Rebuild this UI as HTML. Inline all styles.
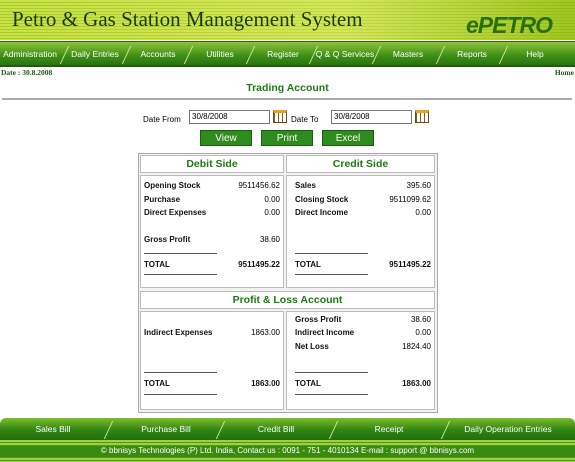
<!DOCTYPE html><html><head><style>
*{margin:0;padding:0;box-sizing:border-box}
body{width:575px;height:462px;position:relative;background:#fff;font-family:"Liberation Sans",Verdana,sans-serif;overflow:hidden}
.a{position:absolute}
.hdr{left:0;top:0;width:575px;height:40px;background:repeating-linear-gradient(180deg,#c8e04a 0 2px,#a8cc20 2px 3px);}
.hdr:after{content:"";position:absolute;left:0;top:0;right:0;bottom:0;background:linear-gradient(90deg,rgba(255,255,255,0) 0,rgba(230,240,120,.4) 60%,rgba(120,170,0,.5) 100%)}
.nav{left:0;top:41px;width:575px;height:26px;background:linear-gradient(#8cc43a,#3e8e16 60%,#2a7410);border-top:1px solid #2a6a0a;border-bottom:2px solid #1f5e08}
.nav span,.fn span{position:absolute;top:7px;color:#fff;font-size:8.5px;transform:translateX(-50%);white-space:nowrap}
.sl{position:absolute;top:4px;width:1px;height:18px;background:#cfe8a0;transform:skewX(-25deg)}
.b{font-weight:bold;font-size:8px;color:#111}
.r{text-align:right}
.g{color:#1d7a12;font-weight:bold;font-size:10.5px;text-align:center}
.box{border:1px solid #bbb;background:#fff}
.ln{height:1px;background:#555;width:73px}
.btn{background:#2e8b1e;color:#fff;font-size:10px;text-align:center;line-height:16px;height:16px;border:1px solid #1b5e10}
.in{border:1px solid #777;height:14px;font-size:8px;padding:1px 2px;background:#fff}
.cal{width:14px;height:13px;background:repeating-linear-gradient(90deg,#8a5a20 0 1px,#fff 1px 4px),#fff;border:1px solid #6a4a10;border-top:3px solid #e8a020}
</style></head><body>
<div class="a hdr"></div>
<div class="a" style="left:12px;top:7px;font-family:'Liberation Serif',serif;font-size:21px;color:#1b3a08">Petro &amp; Gas Station Management System</div>
<div class="a" style="left:466px;top:12px;font-size:23px;font-weight:bold;color:#2a700a;font-style:italic;letter-spacing:-1px">ePETRO</div>
<div class="a nav">
<span style="left:30px">Administration</span><span style="left:95px">Daily Entries</span><span style="left:158px">Accounts</span><span style="left:220px">Utilities</span><span style="left:283px">Register</span><span style="left:345px">Q &amp; Q Services</span><span style="left:408px">Masters</span><span style="left:472px">Reports</span><span style="left:535px">Help</span>
<i class="sl" style="left:64px"></i><i class="sl" style="left:126px"></i><i class="sl" style="left:188px"></i><i class="sl" style="left:250px"></i><i class="sl" style="left:313px"></i><i class="sl" style="left:376px"></i><i class="sl" style="left:440px"></i><i class="sl" style="left:503px"></i>
</div>
<div class="a" style="left:1px;top:68px;font-size:7.5px;font-weight:bold;color:#1d5a10;font-family:'Liberation Serif',serif">Date : 30.8.2008</div>
<div class="a" style="right:1px;top:68px;font-size:7.5px;font-weight:bold;color:#1d5a10;font-family:'Liberation Serif',serif">Home</div>
<div class="a g" style="left:0;width:575px;top:82px">Trading Account</div>
<div class="a" style="left:2px;top:98px;width:570px;height:2px;background:#aaa"></div>
<div class="a" style="left:143px;top:115px;font-size:8px">Date From</div>
<div class="a in" style="left:189px;top:110px;width:81px">30/8/2008</div>
<div class="a cal" style="left:273px;top:110px"></div>
<div class="a" style="left:291px;top:115px;font-size:8px">Date To</div>
<div class="a in" style="left:331px;top:110px;width:81px">30/8/2008</div>
<div class="a cal" style="left:415px;top:110px"></div>
<div class="a btn" style="left:200px;top:130px;width:52px">View</div>
<div class="a btn" style="left:261px;top:130px;width:52px">Print</div>
<div class="a btn" style="left:322px;top:130px;width:52px">Excel</div>
<div class="a" style="left:138px;top:153px;width:300px;height:260px;border:1px solid #aaa;background:#f2f2f2"></div>
<div class="a box g" style="left:140px;top:155px;width:144px;height:18px;line-height:17px">Debit Side</div>
<div class="a box g" style="left:286px;top:155px;width:149px;height:18px;line-height:17px">Credit Side</div>
<div class="a box" style="left:140px;top:175px;width:144px;height:113px"></div>
<div class="a box" style="left:286px;top:175px;width:149px;height:113px"></div>
<div class="a box g" style="left:140px;top:291px;width:295px;height:18px;line-height:17px">Profit &amp; Loss Account</div>
<div class="a box" style="left:140px;top:311px;width:144px;height:99px"></div>
<div class="a box" style="left:286px;top:311px;width:149px;height:99px"></div>

<div class="a b" style="left:144px;top:181px">Opening Stock</div><div class="a r" style="right:295px;top:181px;font-size:8px">9511456.62</div>
<div class="a b" style="left:144px;top:195px">Purchase</div><div class="a r" style="right:295px;top:195px;font-size:8px">0.00</div>
<div class="a b" style="left:144px;top:208px">Direct Expenses</div><div class="a r" style="right:295px;top:208px;font-size:8px">0.00</div>
<div class="a b" style="left:144px;top:235px">Gross Profit</div><div class="a r" style="right:295px;top:235px;font-size:8px">38.60</div>
<div class="a ln" style="left:144px;top:253px"></div>
<div class="a b" style="left:144px;top:260px">TOTAL</div><div class="a b" style="right:295px;top:260px">9511495.22</div>
<div class="a ln" style="left:144px;top:274px"></div>

<div class="a b" style="left:295px;top:181px">Sales</div><div class="a" style="right:144px;top:181px;font-size:8px">395.60</div>
<div class="a b" style="left:295px;top:195px">Closing Stock</div><div class="a" style="right:144px;top:195px;font-size:8px">9511099.62</div>
<div class="a b" style="left:295px;top:208px">Direct Income</div><div class="a" style="right:144px;top:208px;font-size:8px">0.00</div>
<div class="a ln" style="left:295px;top:253px"></div>
<div class="a b" style="left:295px;top:260px">TOTAL</div><div class="a b" style="right:144px;top:260px">9511495.22</div>
<div class="a ln" style="left:295px;top:274px"></div>

<div class="a b" style="left:144px;top:328px">Indirect Expenses</div><div class="a" style="right:295px;top:328px;font-size:8px">1863.00</div>
<div class="a ln" style="left:144px;top:372px"></div>
<div class="a b" style="left:144px;top:379px">TOTAL</div><div class="a b" style="right:295px;top:379px">1863.00</div>
<div class="a ln" style="left:144px;top:394px"></div>
<div class="a b" style="left:295px;top:315px">Gross Profit</div><div class="a" style="right:144px;top:315px;font-size:8px">38.60</div>
<div class="a b" style="left:295px;top:328px">Indirect Income</div><div class="a" style="right:144px;top:328px;font-size:8px">0.00</div>
<div class="a b" style="left:295px;top:342px">Net Loss</div><div class="a" style="right:144px;top:342px;font-size:8px">1824.40</div>
<div class="a ln" style="left:295px;top:372px"></div>
<div class="a b" style="left:295px;top:379px">TOTAL</div><div class="a b" style="right:144px;top:379px">1863.00</div>
<div class="a ln" style="left:295px;top:394px"></div>

<div class="a fn" style="left:0;top:418px;width:575px;height:22px;background:linear-gradient(#7cbc2a,#2f8412 55%,#226e0a);border-radius:6px 6px 0 0">
<span style="left:53px;top:6px">Sales Bill</span><span style="left:166px;top:6px">Purchase Bill</span><span style="left:276px;top:6px">Credit Bill</span><span style="left:389px;top:6px">Receipt</span><span style="left:508px;top:6px">Daily Operation Entries</span>
<i class="sl" style="left:108px;top:3px"></i><i class="sl" style="left:220px;top:3px"></i><i class="sl" style="left:333px;top:3px"></i><i class="sl" style="left:445px;top:3px"></i>
</div>
<div class="a" style="left:0;top:440px;width:575px;height:22px;background:repeating-linear-gradient(180deg,#9ed040 0 2px,#4e9a18 2px 3px)"></div>
<div class="a" style="left:0;top:446px;width:575px;height:11px;background:#3b8a10"></div>
<div class="a" style="left:0;width:575px;top:446px;text-align:center;color:#fff;font-size:8px">© bbnisys Technologies (P) Ltd. India, Contact us : 0091 - 751 - 4010134 E-mail : support @ bbnisys.com</div>
</body></html>
